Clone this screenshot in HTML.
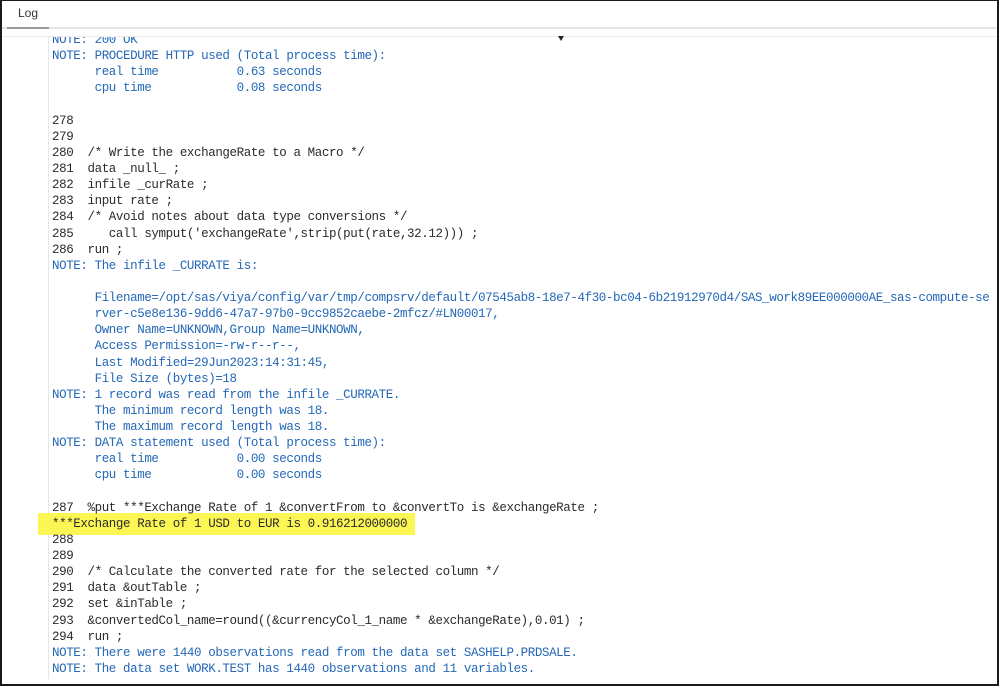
<!DOCTYPE html>
<html><head><meta charset="utf-8"><style>
html,body{margin:0;padding:0;background:#fff;}
body{width:999px;height:687px;position:relative;overflow:hidden;}
.frame{position:absolute;left:0;top:0;width:995px;height:683px;border:2px solid #1a1a1a;border-top:1px solid #1a1a1a;}
.tab{position:absolute;left:18px;top:6px;font:12px "Liberation Sans",sans-serif;color:#333;}
.bar{position:absolute;left:2px;right:3px;top:27px;height:2px;background:#e3e5e8;}
.tabul{position:absolute;left:7px;width:42px;top:27px;height:2px;background:#9a9a9a;}
.bar2{position:absolute;left:2px;right:3px;top:36px;height:1px;background:#ececec;}
.gut{position:absolute;left:48px;top:37px;width:1px;height:642px;background:#e6e6e6;}
.hl{position:absolute;left:38px;top:513px;width:377px;height:22px;background:#fcf655;}
.clip{position:absolute;left:52px;top:37px;width:942px;height:645px;overflow:hidden;}
pre{position:absolute;left:0;top:-5px;margin:0;font:12.5px/16.13px "Liberation Mono",monospace;letter-spacing:-0.4px;color:#2b2b2b;}
.n{color:#2468b8;}
.tri{position:absolute;left:558px;top:36px;width:0;height:0;border-left:3px solid transparent;border-right:3px solid transparent;border-top:5px solid #223;}
</style></head><body>
<div class="frame"></div>
<div class="tab">Log</div>
<div class="bar"></div><div class="tabul"></div>
<div class="bar2"></div>
<div class="gut"></div>
<div class="hl"></div>
<div class="clip"><pre><span class="n">NOTE: 200 OK
NOTE: PROCEDURE HTTP used (Total process time):
      real time           0.63 seconds
      cpu time            0.08 seconds
</span>
278  
279  
280  /* Write the exchangeRate to a Macro */
281  data _null_ ;
282  infile _curRate ;
283  input rate ;
284  /* Avoid notes about data type conversions */
285     call symput('exchangeRate',strip(put(rate,32.12))) ;
286  run ;
<span class="n">NOTE: The infile _CURRATE is:

      Filename=/opt/sas/viya/config/var/tmp/compsrv/default/07545ab8-18e7-4f30-bc04-6b21912970d4/SAS_work89EE000000AE_sas-compute-se
      rver-c5e8e136-9dd6-47a7-97b0-9cc9852caebe-2mfcz/#LN00017,
      Owner Name=UNKNOWN,Group Name=UNKNOWN,
      Access Permission=-rw-r--r--,
      Last Modified=29Jun2023:14:31:45,
      File Size (bytes)=18
NOTE: 1 record was read from the infile _CURRATE.
      The minimum record length was 18.
      The maximum record length was 18.
NOTE: DATA statement used (Total process time):
      real time           0.00 seconds
      cpu time            0.00 seconds
</span>
287  %put ***Exchange Rate of 1 &amp;convertFrom to &amp;convertTo is &amp;exchangeRate ;
***Exchange Rate of 1 USD to EUR is 0.916212000000
288  
289  
290  /* Calculate the converted rate for the selected column */
291  data &amp;outTable ;
292  set &amp;inTable ;
293  &amp;convertedCol_name=round((&amp;currencyCol_1_name * &amp;exchangeRate),0.01) ;
294  run ;
<span class="n">NOTE: There were 1440 observations read from the data set SASHELP.PRDSALE.
NOTE: The data set WORK.TEST has 1440 observations and 11 variables.</span></pre></div>
<div class="tri"></div>
</body></html>
